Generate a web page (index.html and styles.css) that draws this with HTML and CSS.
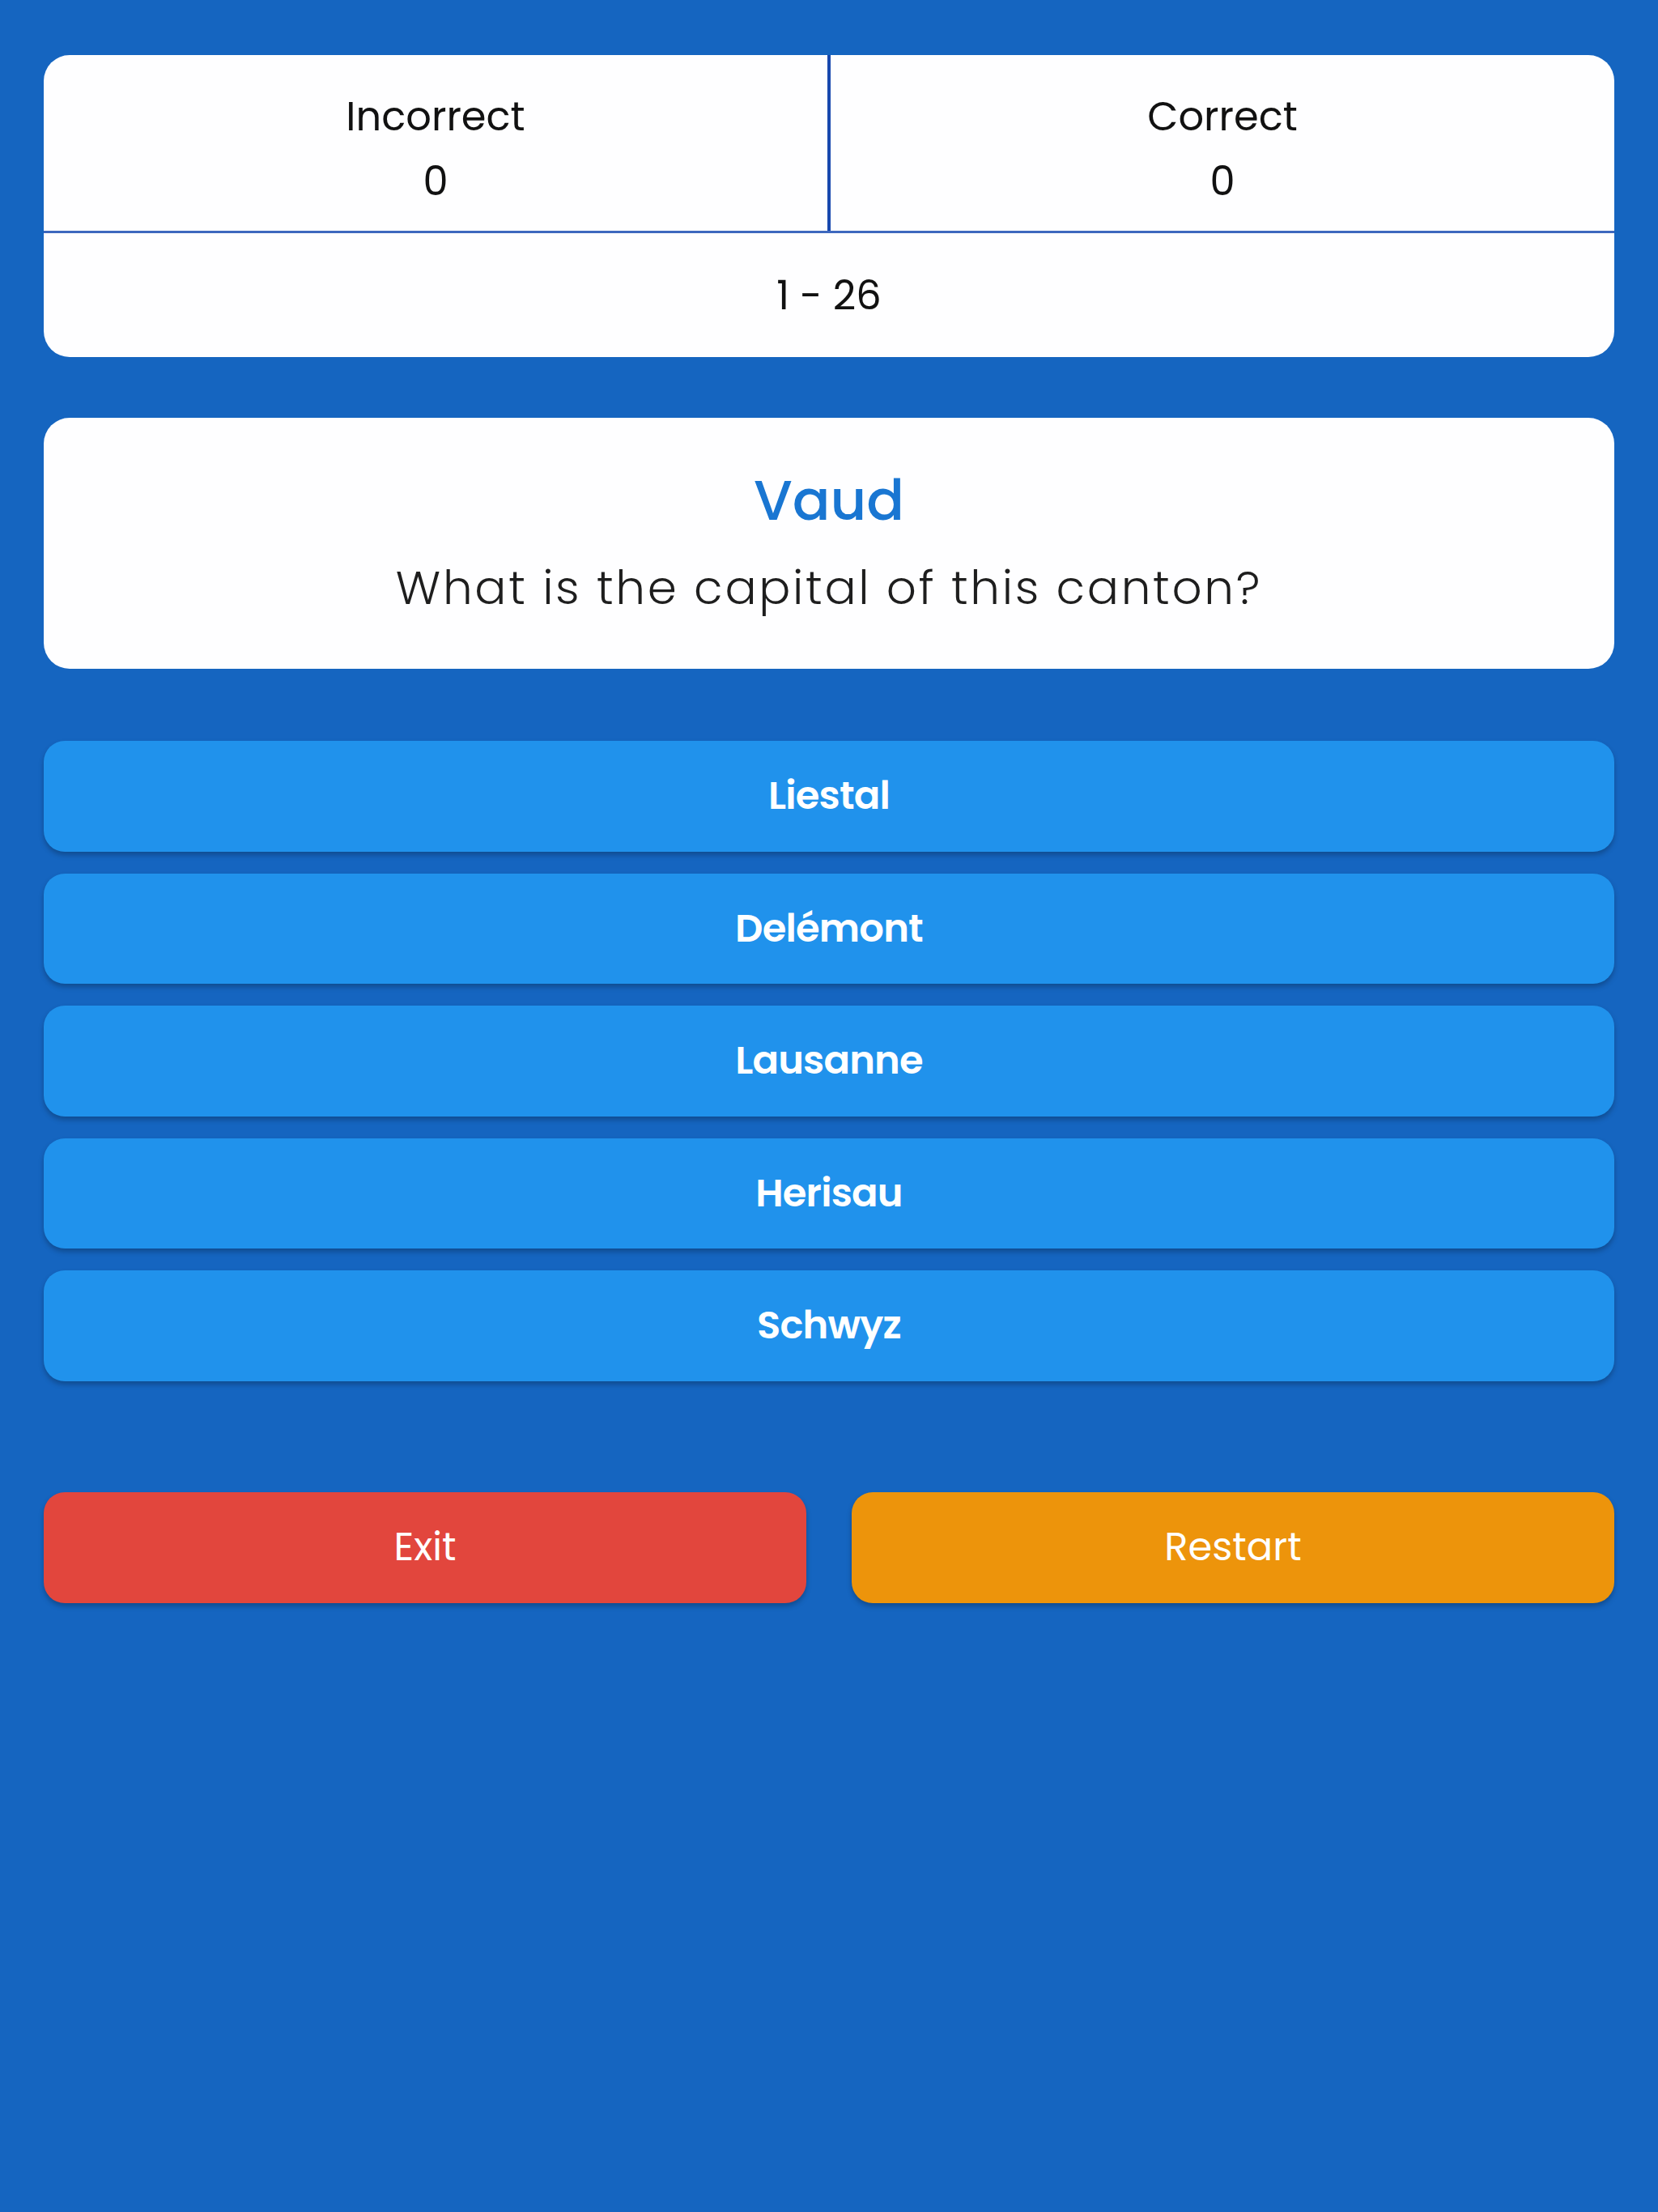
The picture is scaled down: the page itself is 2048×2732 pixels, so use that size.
FILE: index.html
```html
<!DOCTYPE html>
<html lang="en">
<head>
<meta charset="utf-8">
<title>Canton Quiz</title>
<link rel="stylesheet" href="styles.css">
</head>
<body>
<main class="screen">
  <section class="stats card">
    <div class="stats-top">
      <div class="stat">
        <span class="stat-label">Incorrect</span>
        <span class="stat-value">0</span>
      </div>
      <div class="stat">
        <span class="stat-label">Correct</span>
        <span class="stat-value">0</span>
      </div>
    </div>
    <div class="stats-bottom">1 - 26</div>
  </section>

  <section class="question card">
    <h1 class="canton">Vaud</h1>
    <p class="prompt">What is the capital of this canton?</p>
  </section>

  <section class="answers">
    <button class="answer">Liestal</button>
    <button class="answer">Delémont</button>
    <button class="answer">Lausanne</button>
    <button class="answer">Herisau</button>
    <button class="answer">Schwyz</button>
  </section>

  <section class="actions">
    <button class="action exit">Exit</button>
    <button class="action restart">Restart</button>
  </section>
</main>
</body>
</html>
```

FILE: styles.css
```css
html, body {
  margin: 0;
  padding: 0;
  background: #1565c0;
}

body {
  min-height: 2732px;
  font-family: "Poppins", "Open Sans", "Noto Sans", sans-serif;
  color: #111;
}

.screen {
  padding: 68px 54px 0;
  display: flex;
  flex-direction: column;
}

.card {
  background: #fefeff;
  border-radius: 32px;
}

/* stats */
.stats {
  height: 373px;
  display: flex;
  flex-direction: column;
  overflow: hidden;
}

.stats-top {
  height: 220px;
  display: flex;
  border-bottom: 3px solid #3d68be;
  box-sizing: border-box;
}

.stat {
  flex: 1;
  display: flex;
  flex-direction: column;
  align-items: center;
  justify-content: center;
  font-size: 49.5px;
  line-height: 80px;
  padding-top: 14px;
}

.stat + .stat {
  border-left: 4px solid #1748ae;
}

.stats-bottom {
  flex: 1;
  display: flex;
  align-items: center;
  justify-content: center;
  font-size: 49.5px;
  line-height: 1;
}

/* question */
.question {
  margin-top: 75px;
  height: 310px;
  box-sizing: border-box;
  padding-top: 52px;
  text-align: center;
}

.canton {
  margin: 0;
  font-size: 69px;
  line-height: 100px;
  font-weight: 500;
  color: #1976d2;
}

.prompt {
  margin: 18px 0 0;
  font-size: 58px;
  line-height: 80px;
  font-weight: 300;
  letter-spacing: 2.7px;
  color: #1e1e1e;
}

/* answers */
.answers {
  margin-top: 89px;
  display: flex;
  flex-direction: column;
  gap: 27px;
}

button {
  font-family: inherit;
  border: none;
  cursor: pointer;
  color: #fff;
  padding: 0;
}

.answer {
  height: 136.5px;
  border-radius: 26px;
  background: #2092ec;
  font-size: 48px;
  font-weight: 600;
  letter-spacing: -0.8px;
  box-shadow: 0 4px 6px rgba(0, 0, 0, 0.25);
}

/* actions */
.actions {
  margin-top: 137px;
  display: flex;
  gap: 56px;
}

.action {
  flex: 1;
  height: 137px;
  border-radius: 26px;
  font-size: 48px;
  font-weight: 400;
  box-shadow: 0 4px 6px rgba(0, 0, 0, 0.25);
}

.exit {
  background: #e2463d;
}

.restart {
  background: #ed940b;
}
```
